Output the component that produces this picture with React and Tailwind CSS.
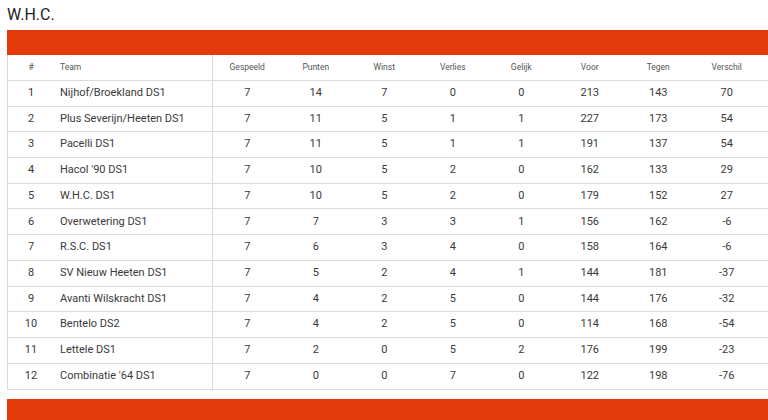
import React from 'react';

const rows = [
  [1, 'Nijhof/Broekland DS1', 7, 14, 7, 0, 0, 213, 143, 70],
  [2, 'Plus Severijn/Heeten DS1', 7, 11, 5, 1, 1, 227, 173, 54],
  [3, 'Pacelli DS1', 7, 11, 5, 1, 1, 191, 137, 54],
  [4, "Hacol '90 DS1", 7, 10, 5, 2, 0, 162, 133, 29],
  [5, 'W.H.C. DS1', 7, 10, 5, 2, 0, 179, 152, 27],
  [6, 'Overwetering DS1', 7, 7, 3, 3, 1, 156, 162, -6],
  [7, 'R.S.C. DS1', 7, 6, 3, 4, 0, 158, 164, -6],
  [8, 'SV Nieuw Heeten DS1', 7, 5, 2, 4, 1, 144, 181, -37],
  [9, 'Avanti Wilskracht DS1', 7, 4, 2, 5, 0, 144, 176, -32],
  [10, 'Bentelo DS2', 7, 4, 2, 5, 0, 114, 168, -54],
  [11, 'Lettele DS1', 7, 2, 0, 5, 2, 176, 199, -23],
  [12, "Combinatie '64 DS1", 7, 0, 0, 7, 0, 122, 198, -76],
];

const stats = ['Gespeeld', 'Punten', 'Winst', 'Verlies', 'Gelijk', 'Voor', 'Tegen', 'Verschil'];

function App() {
  return (
    <div className="w-[768px] h-[420px] overflow-hidden bg-white font-['Roboto',sans-serif]">
      <h1 className="pl-[7px] pt-[3px] h-[30px] text-[16px] leading-[24px] text-[#222]">W.H.C.</h1>
      <div className="ml-[7px] w-[780px]">
        <div className="h-[25px] bg-[#e33a0c]" />
        <div className="border-l border-b border-[#dcdcdc]">
          <div className="flex h-[26px] items-center text-[8.5px] text-[#555] border-b border-[#dcdcdc]">
            <div className="w-[46px] text-center">#</div>
            <div className="w-[159px] pl-[6px] self-stretch flex items-center border-r border-[#dcdcdc]">Team</div>
            {stats.map((s) => (
              <div key={s} className="w-[68.5px] text-center">{s}</div>
            ))}
          </div>
          {rows.map((r, i) => (
            <div
              key={r[0]}
              className={
                'flex h-[25.7px] items-center text-[11px] text-[#3a3a3a] ' +
                (i < rows.length - 1 ? 'border-b border-[#dcdcdc]' : '')
              }
            >
              <div className="w-[46px] text-center">{r[0]}</div>
              <div className="w-[159px] pl-[6px] self-stretch flex items-center border-r border-[#dcdcdc]">{r[1]}</div>
              {r.slice(2).map((v, j) => (
                <div key={j} className="w-[68.5px] text-center">{v}</div>
              ))}
            </div>
          ))}
        </div>
        <div className="mt-[9px] h-[30px] bg-[#e33a0c]" />
      </div>
    </div>
  );
}

export default App;
